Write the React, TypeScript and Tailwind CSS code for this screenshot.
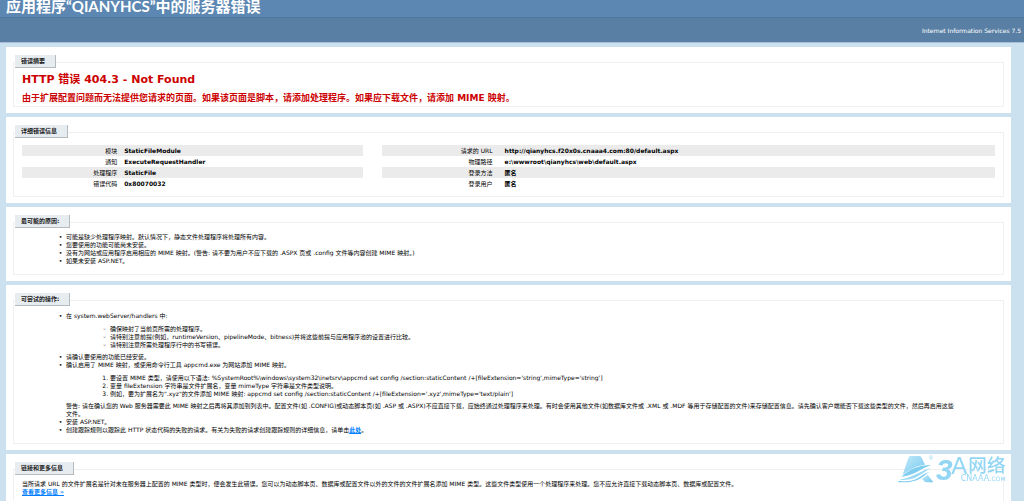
import type { ReactNode } from "react";
import clsx from "clsx";

type Row = { label: string; value: string };

const requestRows: Row[] = [
  { label: "模块", value: "StaticFileModule" },
  { label: "通知", value: "ExecuteRequestHandler" },
  { label: "处理程序", value: "StaticFile" },
  { label: "错误代码", value: "0x80070032" },
];

const urlRows: Row[] = [
  { label: "请求的 URL", value: "http://qianyhcs.f20x0s.cnaaa4.com:80/default.aspx" },
  { label: "物理路径", value: "e:\\wwwroot\\qianyhcs\\web\\default.aspx" },
  { label: "登录方法", value: "匿名" },
  { label: "登录用户", value: "匿名" },
];

const causes = [
  "可能是缺少处理程序映射。默认情况下，静态文件处理程序将处理所有内容。",
  "您要使用的功能可能尚未安装。",
  "没有为网站或应用程序启用相应的 MIME 映射。(警告: 请不要为用户不应下载的 .ASPX 页或 .config 文件等内容创建 MIME 映射。)",
  "如果未安装 ASP.NET。",
];

const Panel = ({ title, children }: { title: string; children: ReactNode }) => (
  <section className="bg-white px-[7px] pt-2 pb-1.5">
    <fieldset className="min-w-0 border border-t-0 border-[#f0f0f0] bg-[linear-gradient(#f0f0f0,#f0f0f0)] bg-[length:100%_1px] bg-no-repeat">
      <legend className="ml-px border-r border-b border-[#b5babd] bg-[#e7ecf0] pr-2.5 pl-1.5 leading-3 font-bold text-[#222]">
        {title}
      </legend>
      {children}
    </fieldset>
  </section>
);

const DetailTable = ({
  rows,
  className,
  labelClassName,
}: {
  rows: Row[];
  className: string;
  labelClassName: string;
}) => (
  <table className={clsx("table-fixed border-collapse self-start", className)}>
    <tbody>
      {rows.map((row) => (
        <tr key={row.label} className="odd:bg-[#ebebeb]">
          <th
            scope="row"
            className={clsx("p-0 text-right leading-[11px] font-normal", labelClassName)}
          >
            {row.label}
          </th>
          <td className="p-0 leading-[11px] font-bold">{row.value}</td>
        </tr>
      ))}
    </tbody>
  </table>
);

const Watermark = () => (
  <svg
    className="pointer-events-none fixed right-4 bottom-3.5 h-8 w-28"
    viewBox="0 0 336 96"
    fill="#93d6f4"
  >
    <defs>
      <linearGradient id="mark" x1="0" y1="0" x2="1" y2="1">
        <stop offset="0" stopColor="#c4eafa" />
        <stop offset="1" stopColor="#74c8ef" />
      </linearGradient>
    </defs>
    <path d="M44 3h26q5 0 7 5l10 21Q64 30 42 45 32 52 20 59L37 9q2-6 7-6Z" fill="url(#mark)" />
    <path d="M16 65Q38 46 58 38 80 29 105 31 88 36 68 48 44 62 16 65Z" fill="#7fcdef" />
    <path d="M10 74Q36 71 60 58 83 44 104 40 92 47 76 58 48 78 10 74Z" fill="#9cdaf4" />
    <path d="M5 82 9 77Q44 84 70 67 86 54 101 50 90 57 80 66 66 77 37 82Z" fill="#7fcdef" />
    <path d="M78 72 95 59l17 23H92q-5 0-7-3Z" fill="url(#mark)" />
    <text x="98" y="14" fontSize="18" fontFamily="Liberation Sans, sans-serif">
      ®
    </text>
    <text x="120" y="76" fontFamily="Liberation Sans, sans-serif">
      <tspan fontSize="90" fontStyle="italic" fontWeight="700">
        3
      </tspan>
      <tspan x="166" y="57" fontSize="72">
        A
      </tspan>
      <tspan x="217" y="51" fontSize="56" fontWeight="500" fontFamily="Noto Sans CJK SC, sans-serif">
        网络
      </tspan>
    </text>
    <text x="329" y="77" textAnchor="end" fontSize="24" fontFamily="DejaVu Sans, sans-serif">
      CNAAA.<tspan fontSize="18">COM</tspan>
    </text>
  </svg>
);

export default function App() {
  return (
    <div className="h-screen overflow-y-auto bg-[#cbe1ef] font-['DejaVu_Sans','Noto_Sans_CJK_SC',sans-serif] text-[6px] leading-2 text-black [scrollbar-width:none]">
      <header>
        <h1 className="bg-[#5c87b2] px-1.5 pb-1 font-['Lato','Noto_Sans_CJK_SC',sans-serif] text-[15px] leading-[13px] font-bold text-white">
          应用程序“QIANYHCS”中的服务器错误
        </h1>
        <div className="border-t border-b border-t-[#4f769c] border-b-[#a6bfd6] bg-[#5a7fa5] pt-0.5 pr-[3px] text-right leading-[22px] text-white">
          Internet Information Services 7.5
        </div>
      </header>

      <main className="flex flex-col gap-1 pt-1 pr-[13px] pl-1.5">
        <Panel title="错误摘要">
          <div className="px-2 pt-0.5 text-[#cc0000]">
            <h2 className="text-[11px] leading-5 font-bold">HTTP 错误 404.3 - Not Found</h2>
            <h3 className="text-[9px] leading-4 font-bold">
              由于扩展配置问题而无法提供您请求的页面。如果该页面是脚本，请添加处理程序。如果应下载文件，请添加 MIME 映射。
            </h3>
          </div>
        </Panel>

        <Panel title="详细错误信息">
          <div className="flex justify-between px-2 pt-[7px] pb-[7px]">
            <DetailTable rows={requestRows} className="w-[35%]" labelClassName="w-[30%] pr-[7px]" />
            <DetailTable rows={urlRows} className="w-[63%]" labelClassName="w-[20%] pr-3" />
          </div>
        </Panel>

        <Panel title="最可能的原因:">
          <ul className="list-['•__'] pt-[5px] pr-2 pb-[9px] pl-13">
            {causes.map((cause) => (
              <li key={cause}>{cause}</li>
            ))}
          </ul>
        </Panel>

        <Panel title="可尝试的操作:">
          <ul className="list-['•__'] pt-1.5 pr-12 pb-[9px] pl-13">
            <li>
              在 system.webServer/handlers 中:
              <ul className="my-1 list-['◦__'] pt-px pl-11">
                <li>确保映射了当前页所需的处理程序。</li>
                <li>
                  请特别注意前提(例如，runtimeVersion、pipelineMode、bitness)并将这些前提与应用程序池的设置进行比较。
                </li>
                <li>请特别注意所需处理程序行中的书写错误。</li>
              </ul>
            </li>
            <li>请确认要使用的功能已经安装。</li>
            <li>
              确认启用了 MIME 映射，或使用命令行工具 appcmd.exe 为网站添加 MIME 映射。
              <ol className="my-1 list-decimal pt-px pl-11">
                <li>
                  要设置 MIME 类型，请使用以下语法: %SystemRoot%\windows\system32\inetsrv\appcmd set config
                  /section:staticContent /+[fileExtension='string',mimeType='string']
                </li>
                <li>变量 fileExtension 字符串是文件扩展名，变量 mimeType 字符串是文件类型说明。</li>
                <li>
                  例如，要为扩展名为".xyz"的文件添加 MIME 映射: appcmd set config /section:staticContent
                  /+[fileExtension='.xyz',mimeType='text/plain']
                </li>
              </ol>
              警告: 请在确认您的 Web 服务器需要此 MIME 映射之后再将其添加到列表中。配置文件(如 .CONFIG)或动态脚本页(如 .ASP 或
              .ASPX)不应直接下载，应始终通过处理程序来处理。有时会使用其他文件(如数据库文件或 .XML 或 .MDF
              等用于存储配置的文件)来存储配置信息。请先确认客户端能否下载这些类型的文件，然后再启用这些文件。
            </li>
            <li>安装 ASP.NET。</li>
            <li>
              创建跟踪规则以跟踪此 HTTP 状态代码的失败的请求。有关为失败的请求创建跟踪规则的详细信息，请单击
              <a href="#trace" className="font-bold text-[#007eff] underline">
                此处
              </a>
              。
            </li>
          </ul>
        </Panel>

        <Panel title="链接和更多信息">
          <div className="px-2 pt-[5px] pb-8">
            <p>
              当所请求 URL 的文件扩展名是针对未在服务器上配置的 MIME
              类型时，便会发生此错误。您可以为动态脚本页、数据库或配置文件以外的文件的文件扩展名添加 MIME
              类型。这些文件类型使用一个处理程序来处理。您不应允许直接下载动态脚本页、数据库或配置文件。
            </p>
            <a href="#more" className="font-bold text-[#007eff] underline">
              查看更多信息 »
            </a>
          </div>
        </Panel>
      </main>

      <Watermark />
    </div>
  );
}
